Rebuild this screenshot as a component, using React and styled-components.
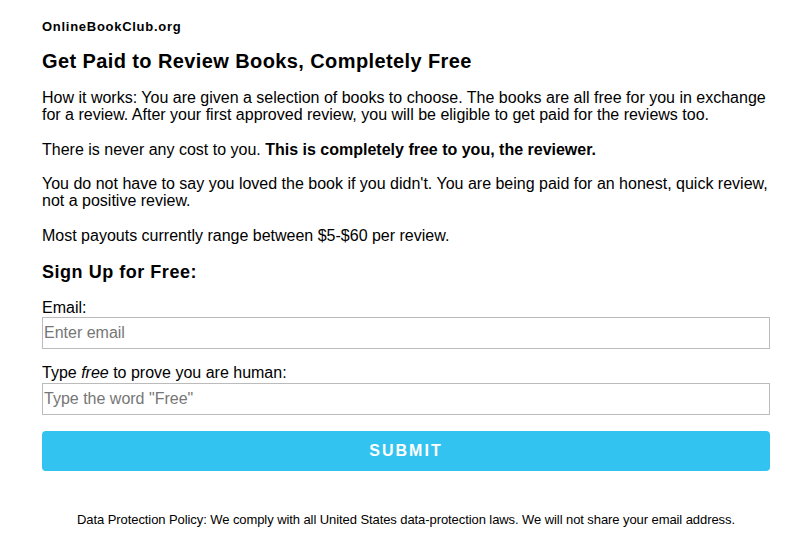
import React from "react";
import styled, { createGlobalStyle } from "styled-components";

const Global = createGlobalStyle`
  html, body { margin: 0; padding: 0; background: #fff; }
  body { font-family: "Liberation Sans", Arial, sans-serif; color: #000; }
`;

const Page = styled.div`
  padding: 17.5px 27px 0 42px;
`;

const Brand = styled.div`
  font-size: 13px;
  font-weight: bold;
  line-height: 18px;
  letter-spacing: 0.72px;
`;

const Title = styled.h1`
  font-size: 20px;
  font-weight: bold;
  margin: 13.5px 0 16px;
  line-height: 24px;
  letter-spacing: 0.4px;
`;

const Para = styled.p`
  font-size: 16px;
  line-height: 17px;
  margin: 0 0 17.5px;
`;

const SubTitle = styled.h2`
  font-size: 18px;
  font-weight: bold;
  line-height: 22px;
  letter-spacing: 0.53px;
  margin: 0 0 15.75px;
`;

const Field = styled.div`
  display: flex;
  flex-direction: column;
  margin-bottom: ${(p) => p.$mb}px;
`;

const Label = styled.label`
  font-size: 16px;
  line-height: 18px;
  margin-bottom: ${(p) => p.$gap || 0}px;
`;

const Input = styled.input`
  box-sizing: border-box;
  width: 100%;
  height: 32px;
  margin: 0;
  border: 1px solid #bbb;
  border-radius: 0;
  padding: 0 1px;
  font-family: "Liberation Sans", Arial, sans-serif;
  font-size: 16px;
  color: #000;
  outline: none;
  &::placeholder { color: #767676; }
`;

const Button = styled.button`
  display: block;
  width: 100%;
  height: 39.5px;
  border: none;
  border-radius: 4px;
  background: #33c3f0;
  color: #fff;
  font-family: "Liberation Sans", Arial, sans-serif;
  font-weight: bold;
  font-size: 16px;
  letter-spacing: 2px;
  text-transform: uppercase;
  cursor: pointer;
`;

const Footer = styled.p`
  margin: 41.5px 0 0;
  text-align: center;
  font-size: 13px;
  line-height: 15px;
  letter-spacing: -0.08px;
`;

export default function App() {
  return (
    <>
      <Global />
      <Page>
        <Brand>OnlineBookClub.org</Brand>
        <Title>Get Paid to Review Books, Completely Free</Title>
        <Para>
          How it works: You are given a selection of books to choose. The books are all free for you in exchange
          for a review. After your first approved review, you will be eligible to get paid for the reviews too.
        </Para>
        <Para>
          There is never any cost to you. <b>This is completely free to you, the reviewer.</b>
        </Para>
        <Para>
          You do not have to say you loved the book if you didn't. You are being paid for an honest, quick review,
          not a positive review.
        </Para>
        <Para>Most payouts currently range between $5-$60 per review.</Para>
        <SubTitle>Sign Up for Free:</SubTitle>
        <Field $mb={15}>
          <Label>Email:</Label>
          <Input type="email" placeholder="Enter email" />
        </Field>
        <Field $mb={16.25}>
          <Label $gap={1}>
            Type <i>free</i> to prove you are human:
          </Label>
          <Input type="text" placeholder={'Type the word "Free"'} />
        </Field>
        <Button>Submit</Button>
        <Footer>
          Data Protection Policy: We comply with all United States data-protection laws. We will not share your email address.
        </Footer>
      </Page>
    </>
  );
}
